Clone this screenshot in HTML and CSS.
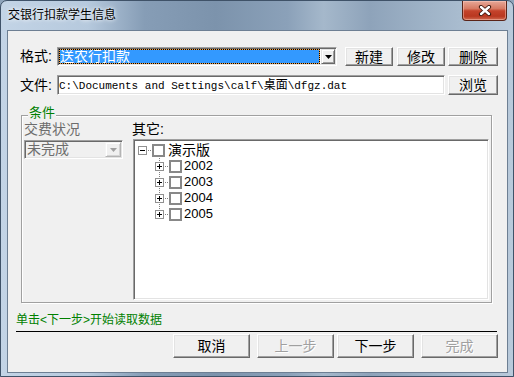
FILE: index.html
```html
<!DOCTYPE html>
<html lang="zh-CN">
<head>
<meta charset="utf-8">
<title>交银行扣款学生信息</title>
<link rel="stylesheet" href="styles.css">
</head>
<body>
<div class="window">
  <div class="titlebar">
    <span class="title">交银行扣款学生信息</span>
    <div class="close">
      <svg width="14" height="11" viewBox="0 0 14 11">
        <path d="M3 2 L11 9 M11 2 L3 9" stroke="#3a1208" stroke-width="4.2" stroke-linecap="round"/>
        <path d="M3 2 L11 9 M11 2 L3 9" stroke="#ffffff" stroke-width="2.4" stroke-linecap="round"/>
      </svg>
    </div>
  </div>
  <div class="client">
    <div class="row row1">
      <span class="label">格式:</span>
      <div class="combo combo-format sunken">
        <div class="combo-sel">送农行扣款</div>
        <div class="drop-btn">
          <svg width="7" height="4" viewBox="0 0 7 4"><path d="M0 0h7L3.5 4z" fill="#000"/></svg>
        </div>
      </div>
      <button class="btn btn-top b-new">新建</button>
      <button class="btn btn-top b-edit">修改</button>
      <button class="btn btn-top b-del">删除</button>
    </div>
    <div class="row row2">
      <span class="label label-file">文件:</span>
      <div class="input sunken">C:\Documents and Settings\calf\<span class="cjk">桌面</span>\dfgz.dat</div>
      <button class="btn btn-top b-browse">浏览</button>
    </div>
    <div class="group">
      <span class="legend">条件</span>
      <div class="col-left">
        <div class="glabel glabel-disabled">交费状况</div>
        <div class="combo combo-disabled sunken">
          <div class="combo-text">未完成</div>
          <div class="drop-btn drop-btn-disabled">
            <svg width="7" height="4" viewBox="0 0 7 4"><path d="M0 0h7L3.5 4z" fill="#a0a0a0"/></svg>
          </div>
        </div>
      </div>
      <div class="col-right">
        <div class="glabel">其它:</div>
        <div class="tree sunken">
          <div class="tnode root">
            <svg class="exp" width="9" height="9" viewBox="0 0 9 9"><rect x="0.5" y="0.5" width="8" height="8" fill="#fff" stroke="#919191"/><path d="M2 4.5h5" stroke="#000"/></svg>
            <span class="hdots"></span>
            <span class="cb"></span>
            <span class="tlabel tlabel-root">演示版</span>
          </div>
          <div class="tnode child">
            <svg class="exp" width="9" height="9" viewBox="0 0 9 9"><rect x="0.5" y="0.5" width="8" height="8" fill="#fff" stroke="#919191"/><path d="M2 4.5h5M4.5 2v5" stroke="#000"/></svg>
            <span class="hdots"></span>
            <span class="cb"></span>
            <span class="tlabel">2002</span>
          </div>
          <div class="tnode child">
            <svg class="exp" width="9" height="9" viewBox="0 0 9 9"><rect x="0.5" y="0.5" width="8" height="8" fill="#fff" stroke="#919191"/><path d="M2 4.5h5M4.5 2v5" stroke="#000"/></svg>
            <span class="hdots"></span>
            <span class="cb"></span>
            <span class="tlabel">2003</span>
          </div>
          <div class="tnode child">
            <svg class="exp" width="9" height="9" viewBox="0 0 9 9"><rect x="0.5" y="0.5" width="8" height="8" fill="#fff" stroke="#919191"/><path d="M2 4.5h5M4.5 2v5" stroke="#000"/></svg>
            <span class="hdots"></span>
            <span class="cb"></span>
            <span class="tlabel">2004</span>
          </div>
          <div class="tnode child last">
            <svg class="exp" width="9" height="9" viewBox="0 0 9 9"><rect x="0.5" y="0.5" width="8" height="8" fill="#fff" stroke="#919191"/><path d="M2 4.5h5M4.5 2v5" stroke="#000"/></svg>
            <span class="hdots"></span>
            <span class="cb"></span>
            <span class="tlabel">2005</span>
          </div>
        </div>
      </div>
    </div>
    <div class="status">单击&lt;下一步&gt;开始读取数据</div>
    <div class="sep"></div>
    <div class="actions">
      <button class="btn btn-bottom">取消</button>
      <button class="btn btn-bottom btn-disabled gap-s">上一步</button>
      <button class="btn btn-bottom gap-xs">下一步</button>
      <button class="btn btn-bottom btn-disabled gap-s">完成</button>
    </div>
  </div>
</div>
</body>
</html>
```

FILE: styles.css
```css
* { box-sizing: border-box; }
html, body { margin: 0; padding: 0; }
body {
  width: 514px;
  height: 377px;
  overflow: hidden;
  background: #8ea4bb;
  font-family: "Liberation Sans", "Noto Sans CJK SC", sans-serif;
  color: #000;
}
.window {
  width: 514px;
  height: 377px;
  border: 1px solid #3f5268;
  border-radius: 7px 7px 0 0;
  background: linear-gradient(90deg, #c3d4e6 0%, #b6c9dd 17%, #869db6 28%, #7c93ac 42%, #8ba1b9 56%, #a5b8cb 63%, #8ea3ba 72%, #a0b4c8 84%, #b9cadb 100%);
  display: flex;
  flex-direction: column;
  overflow: hidden;
}
.titlebar {
  height: 29px;
  display: flex;
  align-items: flex-start;
  flex-shrink: 0;
}
.title {
  font-size: 12px;
  line-height: 14px;
  margin: 7px 0 0 7px;
  text-shadow: 0 0 5px #fff, 0 0 3px #dfe9f3;
}
.close {
  margin-left: auto;
  margin-right: 6px;
  width: 45px;
  height: 20px;
  border: 1px solid #5a2418;
  border-top: none;
  border-radius: 0 0 4px 4px;
  background: linear-gradient(180deg, #e7a898 0%, #d77a63 40%, #c4432b 52%, #b93820 80%, #d06a50 100%);
  box-shadow: inset 0 0 0 1px rgba(255, 210, 200, 0.45);
  display: flex;
  align-items: center;
  justify-content: center;
}
.client {
  margin-left: 6px;
  width: 501px;
  height: 343px;
  flex-shrink: 0;
  border: 1px solid #6d7f93;
  background: #f0f0f0;
  padding: 16px 9px 0 8px;
}
.row {
  display: flex;
  margin-left: 4px;
}
.row1 { height: 19px; }
.row2 { height: 20px; margin-top: 9px; }
.label {
  width: 37px;
  font-size: 14px;
  line-height: 19px;
}
.label-file { line-height: 20px; }

.sunken {
  border: 1px solid;
  border-color: #a0a0a0 #fff #fff #a0a0a0;
  box-shadow: inset 1px 1px #696969, inset -1px -1px #e3e3e3;
  padding: 1px;
}
.combo { display: flex; }
.combo-format {
  width: 280px;
  background: #fff;
}
.combo-sel {
  flex: 1;
  background: #3399ff;
  color: #fff;
  font-size: 14px;
  line-height: 13px;
  border: 1px solid #f4a040;
  outline: 1px dotted #000;
  outline-offset: -1px;
  white-space: nowrap;
}
.drop-btn {
  width: 14px;
  margin-left: 1px;
  background: #f0f0f0;
  border: 1px solid;
  border-color: #e3e3e3 #696969 #696969 #e3e3e3;
  box-shadow: inset 1px 1px #fff, inset -1px -1px #a0a0a0;
  display: flex;
  align-items: center;
  justify-content: center;
}
.drop-btn-disabled {
  width: 16px;
  border-color: #f4f4f4 #b4b4b4 #b4b4b4 #f4f4f4;
  box-shadow: inset 1px 1px #fff, inset -1px -1px #d4d4d4;
}
.btn {
  appearance: none;
  -webkit-appearance: none;
  margin: 0;
  padding: 0;
  font-family: "Liberation Sans", "Noto Sans CJK SC", sans-serif;
  font-size: 14px;
  color: #000;
  background: #f0f0f0;
  border: 1px solid;
  border-color: #fff #696969 #696969 #fff;
  box-shadow: inset -1px -1px #a0a0a0, inset 1px 1px #e3e3e3;
  text-align: center;
}
.btn-top { width: 48px; line-height: 16px; }
.b-new { margin-left: 8px; }
.b-edit { margin-left: 4px; }
.b-del { margin-left: 3px; width: 50px; }
.b-browse { margin-left: 3px; width: 50px; }

.input {
  width: 388px;
  background: #fff;
  font-family: "Liberation Mono", monospace;
  font-size: 11px;
  line-height: 16px;
  padding: 1px 0 0 1px;
  white-space: nowrap;
  overflow: hidden;
}
.cjk {
  font-family: "Liberation Sans", "Noto Sans CJK SC", sans-serif;
  font-size: 12px;
}

.group {
  position: relative;
  margin: 20px 0 0 5px;
  width: 471px;
  height: 188px;
  border: 1px solid #a0a0a0;
  box-shadow: inset 1px 1px #fff, 1px 1px #fff;
  padding: 5px 2px 2px 2px;
  display: flex;
}
.legend {
  position: absolute;
  left: 6px;
  top: -10px;
  padding: 0 1px;
  background: #f0f0f0;
  color: #008000;
  font-size: 13px;
  line-height: 14px;
}
.col-left {
  width: 99px;
  display: flex;
  flex-direction: column;
}
.col-right {
  flex: 1;
  margin-left: 9px;
  display: flex;
  flex-direction: column;
}
.glabel {
  height: 16px;
  font-size: 14px;
  line-height: 16px;
}
.glabel-disabled { color: #6d6d6d; }
.combo-disabled {
  margin-top: 3px;
  height: 19px;
  background: #f0f0f0;
}
.combo-text {
  flex: 1;
  color: #6d6d6d;
  font-size: 14px;
  line-height: 15px;
  padding-left: 1px;
}
.tree {
  flex: 1;
  margin-top: 2px;
  margin-left: 1px;
  background: #fff;
  padding: 2px 1px 1px 1px;
}
.tnode {
  display: flex;
  align-items: center;
  height: 16px;
}
.root { padding-left: 3px; }
.child {
  padding-left: 20px;
  background: linear-gradient(180deg, #808080 50%, transparent 50%) 24px 0 / 1px 2px repeat-y;
}
.child.last {
  background:
    linear-gradient(#fff, #fff) 0 8px / 100% 8px no-repeat,
    linear-gradient(180deg, #808080 50%, transparent 50%) 24px 0 / 1px 2px repeat-y;
}
.exp { display: block; flex-shrink: 0; }
.hdots {
  width: 5px;
  height: 1px;
  background: linear-gradient(90deg, transparent 50%, #808080 50%) 0 0 / 2px 1px repeat-x;
}
.cb {
  width: 13px;
  height: 13px;
  border: 2px solid #888;
  background: #fff;
  flex-shrink: 0;
}
.tlabel {
  margin-left: 2px;
  font-size: 13px;
  line-height: 16px;
}
.tlabel-root {
  margin-left: 3px;
  font-size: 14px;
}

.status {
  margin-top: 10px;
  font-size: 12px;
  line-height: 14px;
  color: #008000;
}
.sep {
  margin-top: 4px;
  margin-right: 1px;
  height: 1px;
  background: #000;
}
.actions {
  display: flex;
  justify-content: flex-end;
  margin-top: 2px;
}
.btn-bottom {
  width: 77px;
  height: 24px;
  line-height: 20px;
}
.gap-s { margin-left: 7px; }
.gap-xs { margin-left: 3px; }
.btn-disabled {
  color: #a0a0a0;
  text-shadow: 1px 1px 0 #fff;
}
```
